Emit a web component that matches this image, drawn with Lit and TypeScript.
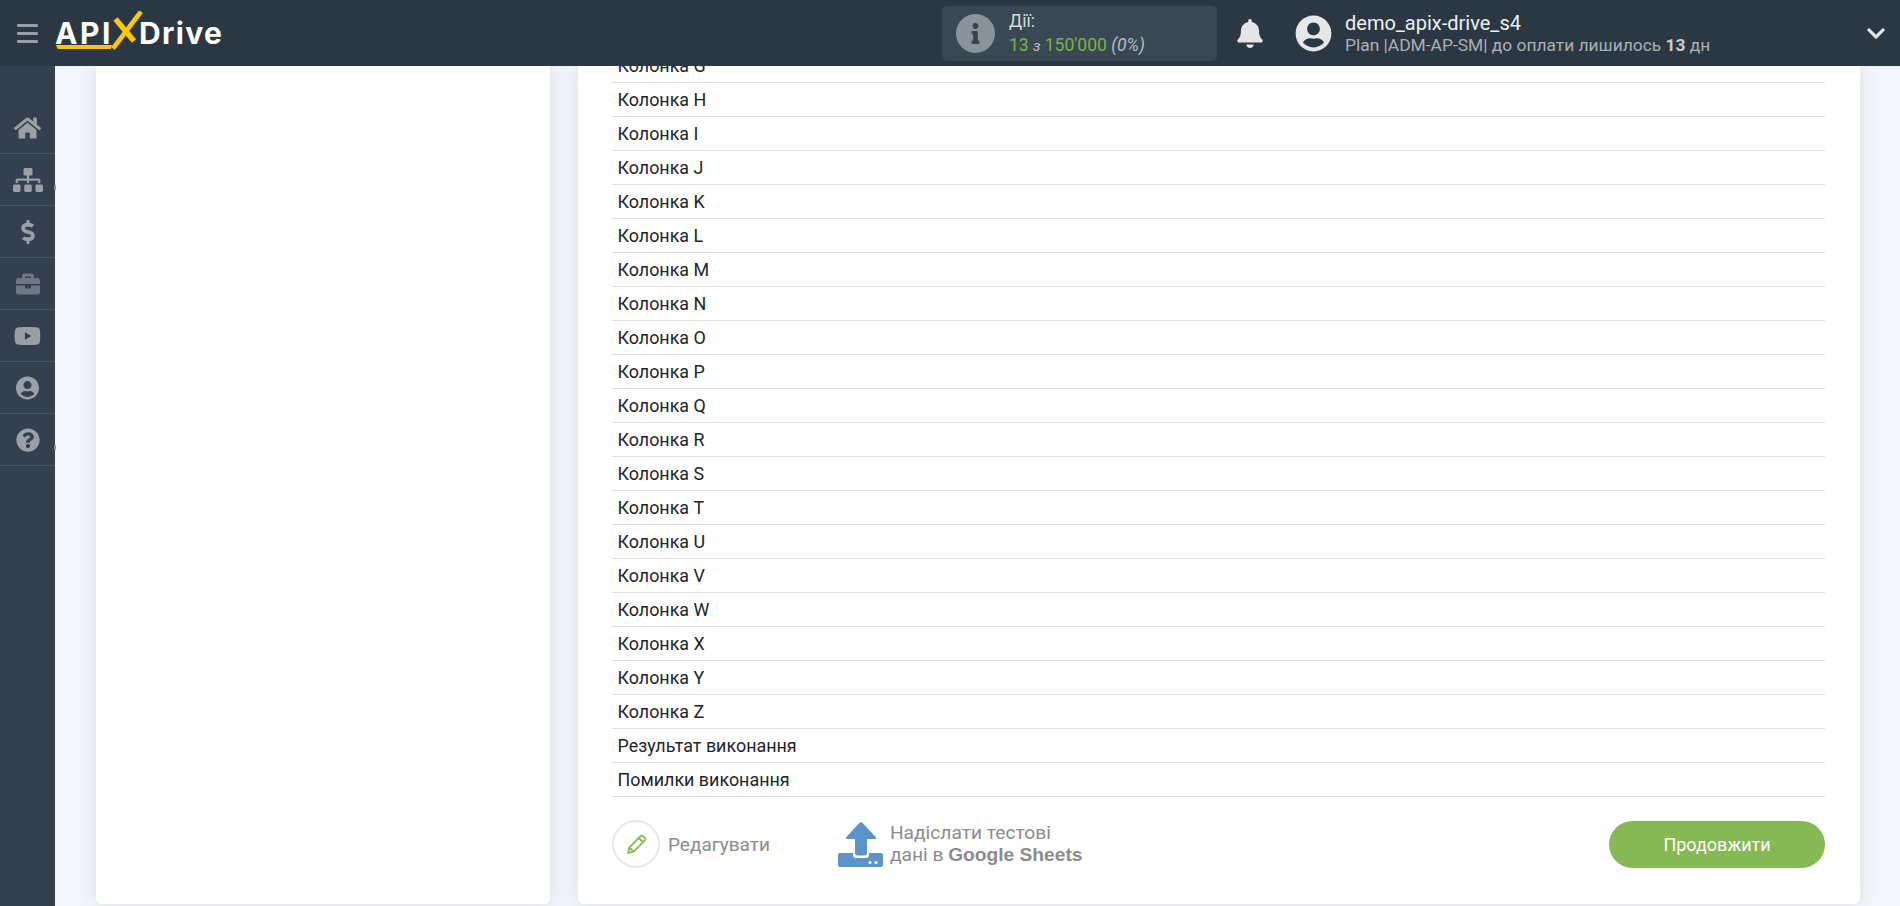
import { LitElement, html, css, svg } from "lit";
import { customElement } from "lit/decorators.js";

const ICONS = {
  home: ["0 0 576 512", "M280.37 148.26L96 300.11V464a16 16 0 0 0 16 16l112.06-.29a16 16 0 0 0 15.92-16V368a16 16 0 0 1 16-16h64a16 16 0 0 1 16 16v95.64a16 16 0 0 0 16 16.05L464 480a16 16 0 0 0 16-16V300L295.67 148.26a12.19 12.19 0 0 0-15.3 0zM571.6 251.47L488 182.56V44.05a12 12 0 0 0-12-12h-56a12 12 0 0 0-12 12v72.61L318.47 43a48 48 0 0 0-61 0L4.34 251.47a12 12 0 0 0-1.6 16.9l25.5 31A12 12 0 0 0 45.15 301l235.22-193.74a12.19 12.19 0 0 1 15.3 0L530.9 301a12 12 0 0 0 16.9-1.6l25.5-31a12 12 0 0 0-1.7-16.93z"],
  sitemap: ["0 0 640 512", "M128 352H32c-17.67 0-32 14.33-32 32v96c0 17.67 14.33 32 32 32h96c17.67 0 32-14.33 32-32v-96c0-17.67-14.33-32-32-32zm-24-80h192v48h48v-48h192v48h48v-57.59c0-21.17-17.23-38.41-38.41-38.41H344v-64h40c17.67 0 32-14.33 32-32V32c0-17.67-14.33-32-32-32H256c-17.67 0-32 14.33-32 32v96c0 17.67 14.33 32 32 32h40v64H94.41C73.23 224 56 241.23 56 262.41V320h48v-48zm264 80h-96c-17.67 0-32 14.33-32 32v96c0 17.67 14.33 32 32 32h96c17.67 0 32-14.33 32-32v-96c0-17.67-14.33-32-32-32zm240 0h-96c-17.67 0-32 14.33-32 32v96c0 17.67 14.33 32 32 32h96c17.67 0 32-14.33 32-32v-96c0-17.67-14.33-32-32-32z"],
  dollar: ["0 0 288 512", "M209.2 233.4l-108-31.6C88.7 198.2 80 186.5 80 173.5c0-16.3 13.2-29.5 29.5-29.5h66.3c12.2 0 24.2 3.7 34.2 10.5 6.1 4.1 14.3 3.1 19.5-2l34.8-34c7.1-6.9 6.1-18.4-1.8-24.5C238 74.8 207.4 64.1 176 64V16c0-8.8-7.2-16-16-16h-32c-8.8 0-16 7.2-16 16v48h-2.5C45.8 64-5.4 118.7.5 183.6c4.2 46.1 39.4 83.6 83.8 96.6l102.5 30c12.5 3.7 21.2 15.3 21.2 28.3 0 16.3-13.2 29.5-29.5 29.5h-66.3C100 368 88 364.3 78 357.5c-6.1-4.1-14.3-3.1-19.5 2l-34.8 34c-7.1 6.9-6.1 18.4 1.8 24.5 24.5 19.2 55.1 29.9 86.5 30v48c0 8.8 7.2 16 16 16h32c8.8 0 16-7.2 16-16v-48.2c46.6-.9 90.3-28.6 105.7-72.7 21.5-61.6-14.6-124.8-72.5-141.7z"],
  briefcase: ["0 0 512 512", "M320 336c0 8.84-7.16 16-16 16h-96c-8.84 0-16-7.16-16-16v-48H0v144c0 25.6 22.4 48 48 48h416c25.6 0 48-22.4 48-48V288H320v48zm144-208h-80V80c0-25.6-22.4-48-48-48H176c-25.6 0-48 22.4-48 48v48H48c-25.6 0-48 22.4-48 48v80h512v-80c0-25.6-22.4-48-48-48zm-144 0H192V96h128v32z"],
  youtube: ["0 0 576 512", "M549.655 124.083c-6.281-23.65-24.787-42.276-48.284-48.597C458.781 64 288 64 288 64S117.22 64 74.629 75.486c-23.497 6.322-42.003 24.947-48.284 48.597-11.412 42.867-11.412 132.305-11.412 132.305s0 89.438 11.412 132.305c6.281 23.65 24.787 41.5 48.284 47.821C117.22 448 288 448 288 448s170.78 0 213.371-11.486c23.497-6.321 42.003-24.171 48.284-47.821 11.412-42.867 11.412-132.305 11.412-132.305s0-89.438-11.412-132.305zm-317.51 213.508V175.185l142.739 81.205-142.739 81.201z"],
  user: ["0 0 496 512", "M248 8C111 8 0 119 0 256s111 248 248 248 248-111 248-248S385 8 248 8zm0 96c48.6 0 88 39.4 88 88s-39.4 88-88 88-88-39.4-88-88 39.4-88 88-88zm0 344c-58.7 0-111.3-26.6-146.5-68.2 18.8-35.4 55.6-59.8 98.5-59.8 2.4 0 4.8.4 7.1 1.1 13 4.2 26.6 6.9 40.9 6.9 14.3 0 28-2.7 40.9-6.9 2.3-.7 4.7-1.1 7.1-1.1 42.9 0 79.7 24.4 98.5 59.8C359.3 421.4 306.7 448 248 448z"],
  question: ["0 0 512 512", "M504 256c0 136.997-111.043 248-248 248S8 392.997 8 256C8 119.083 119.043 8 256 8s248 111.083 248 248zM262.655 90c-54.497 0-89.255 22.957-116.549 63.758-3.536 5.286-2.353 12.415 2.715 16.258l34.699 26.31c5.205 3.947 12.621 3.008 16.665-2.122 17.864-22.658 30.113-35.797 57.303-35.797 20.429 0 45.698 13.148 45.698 32.958 0 14.976-12.363 22.667-32.534 33.976C247.128 238.528 216 254.941 216 296v4c0 6.627 5.373 12 12 12h56c6.627 0 12-5.373 12-12v-1.333c0-28.462 83.186-29.647 83.186-106.667 0-58.002-60.165-102-116.531-102zM256 338c-25.365 0-46 20.635-46 46 0 25.364 20.635 46 46 46s46-20.636 46-46c0-25.365-20.635-46-46-46z"],
  bell: ["0 0 448 512", "M224 512c35.32 0 63.97-28.65 63.97-64H160.03c0 35.35 28.65 64 63.97 64zm215.39-149.71c-19.32-20.76-55.47-51.99-55.47-154.29 0-77.7-54.48-139.9-127.94-155.16V32c0-17.67-14.32-32-31.98-32s-31.98 14.33-31.98 32v20.84C118.56 68.1 64.08 130.3 64.08 208c0 102.3-36.15 133.53-55.47 154.29-6 6.45-8.66 14.16-8.61 21.71.11 16.4 12.98 32 32.1 32h383.8c19.12 0 32-15.6 32.1-32 .05-7.55-2.61-15.27-8.61-21.71z"],
  chevron: ["0 0 448 512", "M207.029 381.476L12.686 187.132c-9.373-9.373-9.373-24.569 0-33.941l22.667-22.667c9.357-9.357 24.522-9.375 33.901-.04L224 284.505l154.745-154.021c9.379-9.335 24.544-9.317 33.901.04l22.667 22.667c9.373 9.373 9.373 24.569 0 33.941L240.971 381.476c-9.373 9.372-24.569 9.372-33.942 0z"],
} as const;

const icon = (name: keyof typeof ICONS, cls = "") => {
  const [vb, d] = ICONS[name];
  return html`<svg class=${cls} viewBox=${vb} fill="currentColor" aria-hidden="true">${svg`<path d=${d}></path>`}</svg>`;
};

const NAV: [keyof typeof ICONS, string, boolean][] = [
  ["home", "nav-home", false],
  ["sitemap", "nav-map", true],
  ["dollar", "nav-dollar", false],
  ["briefcase", "nav-case", false],
  ["youtube", "nav-yt", false],
  ["user", "nav-user", false],
  ["question", "nav-q", true],
];

const ROWS = [
  ..."GHIJKLMNOPQRSTUVWXYZ".split("").map((c) => `Колонка ${c}`),
  "Результат виконання",
  "Помилки виконання",
];

@customElement("app-root")
export class AppRoot extends LitElement {
  static styles = css`
    :host {
      display: flex;
      flex-direction: column;
      width: 100%;
      height: 100vh;
      overflow: hidden;
      background: #f3f6fb;
      font-family: Roboto, "Liberation Sans", sans-serif;
    }
    svg { display: block; }
    .header {
      flex: 0 0 66px;
      display: flex;
      align-items: center;
      background: #2c3744;
      color: #fff;
      position: relative;
      z-index: 2;
    }
    .brand {
      flex: 0 0 942px;
      display: flex;
      align-items: center;
      padding-left: 17px;
      box-sizing: border-box;
    }
    .burger {
      width: 21px;
      display: flex;
      flex-direction: column;
      gap: 5px;
    }
    .burger span { height: 3px; background: #9a9fa6; border-radius: 1px; }
    .logo {
      margin-left: 17px;
      position: relative;
      display: flex;
      align-items: center;
      height: 44px;
      font-family: Inter, "Open Sans", sans-serif;
      font-weight: 700;
      font-size: 30px;
      color: #fff;
    }
    .logo-api { letter-spacing: 2.6px; }
    .logo-api::after {
      content: "";
      position: absolute;
      left: 1px;
      top: 34px;
      width: 56px;
      height: 4px;
      background: #fcc800;
      clip-path: polygon(0 0, 100% 0, 98% 100%, 3% 100%);
    }
    .logo-x { width: 34px; height: 44px; margin: 0 0 0 -3px; flex: none; }
    .logo-drive { letter-spacing: 1.3px; margin-left: -5px; }
    .stats {
      flex: 0 0 275px;
      height: 55px;
      border-radius: 5px;
      background: #3a4853;
      display: flex;
      align-items: center;
      padding-left: 14px;
      box-sizing: border-box;
      gap: 14px;
    }
    .stats-icon {
      width: 39px;
      height: 39px;
      border-radius: 50%;
      background: #8a9399;
      color: #36434e;
      display: flex;
      align-items: center;
      justify-content: center;
    }
    .stats-icon svg { height: 21px; width: 9px; }
    .stats-text { font-size: 17.5px; line-height: 24px; color: #d5d9dc; }
    .stats-text .g { color: #7cb342; }
    .stats-text .s { color: #b7bdc2; font-size: 15px; }
    .stats-text em { color: #b7bdc2; }
    .bell { width: 26px; height: 29px; margin-left: 20px; color: #e3e5e7; }
    .avatar { width: 37px; height: 37px; margin-left: 32px; color: #e6e7e8; }
    .account { margin-left: 13px; }
    .account-name { font-size: 20px; line-height: 24px; color: #eef0f1; }
    .account-sub { font-size: 17.4px; line-height: 20px; color: #aab0b6; }
    .account-sub b { color: #c7cbcf; }
    .caret { width: 18px; height: 21px; margin-left: auto; margin-right: 15px; color: #e2e5e8; }
    .body { flex: 1; min-height: 0; display: flex; }
    .side {
      flex: 0 0 55px;
      background: #343f4f;
      padding-top: 36px;
      box-sizing: border-box;
      position: relative;
      z-index: 1;
    }
    .nav {
      height: 52px;
      box-sizing: border-box;
      border-bottom: 1px solid #475260;
      display: flex;
      align-items: center;
      justify-content: center;
      color: #9aa0a8;
      position: relative;
    }
    .nav-home { width: 27px; height: 24px; }
    .nav-map { width: 30px; height: 24px; }
    .nav-dollar { width: 14px; height: 24px; }
    .nav-case { width: 24px; height: 24px; color: #6f7884; }
    .nav-yt { width: 27px; height: 24px; }
    .nav-user { width: 23px; height: 24px; }
    .nav-q { width: 24px; height: 24px; }
    .tick {
      position: absolute;
      left: 54px;
      top: 31px;
      width: 2px;
      height: 5px;
      background: #8d939b;
    }
    .main {
      flex: 1;
      min-width: 0;
      display: flex;
      gap: 28px;
      padding: 0 40px 2px 41px;
    }
    .card {
      background: #fff;
      border-radius: 0 0 6px 6px;
      box-shadow: 0 0 20px rgba(40, 50, 80, 0.13);
    }
    .card-left { flex: 0 0 454px; }
    .card-right {
      flex: 1;
      min-width: 0;
      display: flex;
      flex-direction: column;
      padding: 0 35px 36px 34px;
    }
    .rows {
      flex: 1;
      min-height: 0;
      overflow: hidden;
      display: flex;
      flex-direction: column;
      justify-content: flex-end;
    }
    .row {
      flex: 0 0 34px;
      box-sizing: border-box;
      border-bottom: 1px solid #e0e0e0;
      padding-left: 5.5px;
      font-size: 17.9px;
      line-height: 33px;
      color: #212529;
    }
    .footer {
      flex: none;
      display: flex;
      align-items: center;
      padding-top: 23px;
    }
    .edit { display: flex; align-items: center; gap: 8px; color: #8c8c8c; font-size: 19px; }
    .edit-circle {
      width: 48px;
      height: 48px;
      box-sizing: border-box;
      border: 2px solid #e1ebe8;
      border-radius: 50%;
      display: flex;
      align-items: center;
      justify-content: center;
    }
    .edit-circle svg { width: 27px; height: 27px; }
    .send { margin-left: 68px; display: flex; align-items: center; gap: 7px; }
    .send svg { width: 45px; height: 45px; flex: none; }
    .send-text { font-size: 19.2px; line-height: 22px; color: #8c8c8c; }
    .send-text b { font-family: "Liberation Sans", Arial, sans-serif; }
    .go {
      margin-left: auto;
      width: 216px;
      height: 47px;
      border: 0;
      border-radius: 24px;
      background: #86b853;
      color: #fff;
      font: 400 18px Roboto, sans-serif;
    }
  `;

  render() {
    return html`
      <div class="header">
        <div class="brand">
          <div class="burger"><span></span><span></span><span></span></div>
          <div class="logo">
            <span class="logo-api">API</span>
            <svg class="logo-x" viewBox="0 0 34 44" aria-hidden="true">
              <path d="M3 37.5 L31 0.5" stroke="#fcc800" stroke-width="4.6" fill="none"></path>
              <path d="M5.5 8 L24 30" stroke="#fcc800" stroke-width="5.5" fill="none"></path>
            </svg>
            <span class="logo-drive">Drive</span>
          </div>
        </div>
        <div class="stats">
          <div class="stats-icon">
            <svg viewBox="0 0 192 512" fill="currentColor" aria-hidden="true"><path d="M20 424.229h20V279.771H20c-11.046 0-20-8.954-20-20V212c0-11.046 8.954-20 20-20h112c11.046 0 20 8.954 20 20v212.229h20c11.046 0 20 8.954 20 20V492c0 11.046-8.954 20-20 20H20c-11.046 0-20-8.954-20-20v-47.771c0-11.046 8.954-20 20-20zM96 0C56.235 0 24 32.235 24 72s32.235 72 72 72 72-32.235 72-72S135.764 0 96 0z"></path></svg>
          </div>
          <div class="stats-text">
            <div>Дії:</div>
            <div><span class="g">13</span> <em class="s">з</em> <span class="g">150'000</span> <em>(0%)</em></div>
          </div>
        </div>
        ${icon("bell", "bell")}
        ${icon("user", "avatar")}
        <div class="account">
          <div class="account-name">demo_apix-drive_s4</div>
          <div class="account-sub">Plan |ADM-AP-SM| до оплати лишилось <b>13</b> дн</div>
        </div>
        ${icon("chevron", "caret")}
      </div>
      <div class="body">
        <div class="side">
          ${NAV.map(([n, c, t]) => html`<div class="nav">${icon(n, c)}${t ? html`<span class="tick"></span>` : ""}</div>`)}
        </div>
        <div class="main">
          <div class="card card-left"></div>
          <div class="card card-right">
            <div class="rows">
              ${ROWS.map((r) => html`<div class="row">${r}</div>`)}
            </div>
            <div class="footer">
              <div class="edit">
                <div class="edit-circle">
                  <svg viewBox="0 0 24 24" fill="none" stroke="#8bbb54" stroke-width="1.7" stroke-linejoin="round" aria-hidden="true"><path d="M4.5 19.5 l1.2 -5 L15.5 4.7 a1.8 1.8 0 0 1 2.6 0 l1.2 1.2 a1.8 1.8 0 0 1 0 2.6 L9.5 18.3 Z M14 6.2 l3.8 3.8 M5.7 14.5 l3.8 3.8"></path></svg>
                </div>
                <span>Редагувати</span>
              </div>
              <div class="send">
                <svg viewBox="0 0 45 45" fill="#5b94c8" aria-hidden="true">
                  <path d="M21.6 .8 a2 2 0 0 1 2.8 0 L37.6 15 Q39 17 36.8 17 H29 V31 Q29 33.5 26.5 33.5 H19.5 Q17 33.5 17 31 V17 H9.2 Q7 17 8.4 15 Z"></path>
                  <path d="M2 31 H15 V33 Q15 36 18 36 H28 Q31 36 31 33 V31 H43 Q45 31 45 33 V43 Q45 45 43 45 H2 Q0 45 0 43 V33 Q0 31 2 31 Z"></path>
                  <circle cx="32" cy="40.5" r="1.6" fill="#fff"></circle>
                  <circle cx="38" cy="40.5" r="1.6" fill="#fff"></circle>
                </svg>
                <div class="send-text">Надіслати тестові<br />дані в <b>Google Sheets</b></div>
              </div>
              <button class="go">Продовжити</button>
            </div>
          </div>
        </div>
      </div>
    `;
  }
}
